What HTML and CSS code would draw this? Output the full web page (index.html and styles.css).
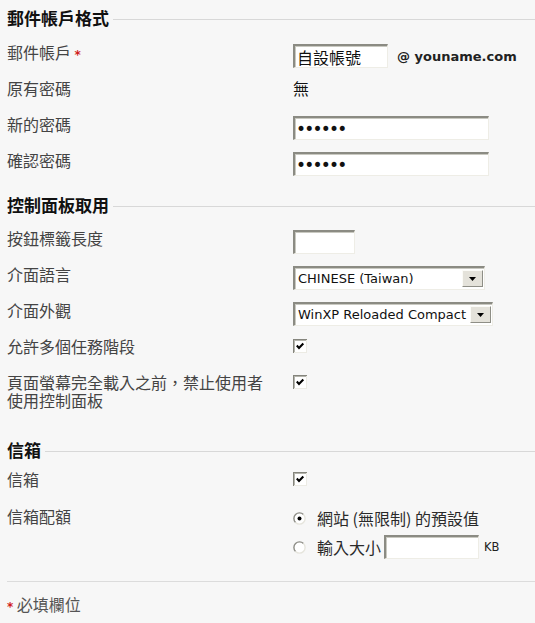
FILE: index.html
```html
<!DOCTYPE html>
<html lang="zh-Hant">
<head>
<meta charset="utf-8">
<title>郵件帳戶設定</title>
<link rel="stylesheet" href="styles.css">
</head>
<body>
<div class="page">
  <section class="group g1">
    <h2 class="group-title">郵件帳戶格式</h2>
    <div class="fields">
      <div class="row">
        <label class="lbl">郵件帳戶 <span class="req">*</span></label>
        <div class="ctl">
          <input class="txt w-acct" type="text" value="自設帳號">
          <span class="domain">@ youname.com</span>
        </div>
      </div>
      <div class="row">
        <span class="lbl">原有密碼</span>
        <div class="ctl"><span class="val">無</span></div>
      </div>
      <div class="row">
        <label class="lbl">新的密碼</label>
        <div class="ctl"><input class="txt pw w-pw" type="password" value="xxxxxx"></div>
      </div>
      <div class="row">
        <label class="lbl">確認密碼</label>
        <div class="ctl"><input class="txt pw w-pw" type="password" value="xxxxxx"></div>
      </div>
    </div>
  </section>

  <section class="group g2">
    <h2 class="group-title">控制面板取用</h2>
    <div class="fields">
      <div class="row">
        <label class="lbl">按鈕標籤長度</label>
        <div class="ctl"><input class="txt w-short" type="text" value=""></div>
      </div>
      <div class="row">
        <label class="lbl">介面語言</label>
        <div class="ctl">
          <div class="select w-lang">
            <span class="sel-text">CHINESE (Taiwan)</span>
            <span class="sel-btn"><svg width="7" height="4" viewBox="0 0 7 4"><path d="M0 0H7L3.5 4Z" fill="#000"/></svg></span>
          </div>
        </div>
      </div>
      <div class="row">
        <label class="lbl">介面外觀</label>
        <div class="ctl">
          <div class="select w-skin">
            <span class="sel-text">WinXP Reloaded Compact</span>
            <span class="sel-btn"><svg width="7" height="4" viewBox="0 0 7 4"><path d="M0 0H7L3.5 4Z" fill="#000"/></svg></span>
          </div>
        </div>
      </div>
      <div class="row">
        <label class="lbl">允許多個任務階段</label>
        <div class="ctl"><span class="cb"><svg width="14" height="14" viewBox="0 0 14 14"><rect width="14" height="14" fill="#fff"/><path d="M0 0H14V1H1V14H0Z" fill="#85857d"/><path d="M1 1H13V2H2V13H1Z" fill="#b5b5ad"/><path d="M13 1V13H1V14H14V1Z" fill="#ecebe4"/><path d="M3.8 6.6L6 8.9L10.3 4.5" stroke="#000" stroke-width="2.1" fill="none"/></svg></span></div>
      </div>
      <div class="row">
        <label class="lbl lbl-wrap">頁面螢幕完全載入之前，禁止使用者使用控制面板</label>
        <div class="ctl"><span class="cb"><svg width="14" height="14" viewBox="0 0 14 14"><rect width="14" height="14" fill="#fff"/><path d="M0 0H14V1H1V14H0Z" fill="#85857d"/><path d="M1 1H13V2H2V13H1Z" fill="#b5b5ad"/><path d="M13 1V13H1V14H14V1Z" fill="#ecebe4"/><path d="M3.8 6.6L6 8.9L10.3 4.5" stroke="#000" stroke-width="2.1" fill="none"/></svg></span></div>
      </div>
    </div>
  </section>

  <section class="group g3">
    <h2 class="group-title">信箱</h2>
    <div class="fields">
      <div class="row">
        <label class="lbl">信箱</label>
        <div class="ctl"><span class="cb"><svg width="14" height="14" viewBox="0 0 14 14"><rect width="14" height="14" fill="#fff"/><path d="M0 0H14V1H1V14H0Z" fill="#85857d"/><path d="M1 1H13V2H2V13H1Z" fill="#b5b5ad"/><path d="M13 1V13H1V14H14V1Z" fill="#ecebe4"/><path d="M3.8 6.6L6 8.9L10.3 4.5" stroke="#000" stroke-width="2.1" fill="none"/></svg></span></div>
      </div>
      <div class="row row-quota">
        <label class="lbl">信箱配額</label>
        <div class="ctl radios">
          <div class="radio-line">
            <span class="rb"><svg width="13" height="13" viewBox="0 0 13 13"><circle cx="6.5" cy="6.5" r="5.6" fill="#fff"/><path d="M2.54 10.46A5.6 5.6 0 0 1 10.46 2.54" stroke="#8d8d86" stroke-width="1.4" fill="none"/><path d="M10.46 2.54A5.6 5.6 0 0 1 2.54 10.46" stroke="#e6e5dd" stroke-width="1.4" fill="none"/><circle cx="6.5" cy="6.5" r="2" fill="#000"/></svg></span>
            <span class="opt">網站 (無限制) 的預設值</span>
          </div>
          <div class="radio-line">
            <span class="rb"><svg width="13" height="13" viewBox="0 0 13 13"><circle cx="6.5" cy="6.5" r="5.6" fill="#fff"/><path d="M2.54 10.46A5.6 5.6 0 0 1 10.46 2.54" stroke="#8d8d86" stroke-width="1.4" fill="none"/><path d="M10.46 2.54A5.6 5.6 0 0 1 2.54 10.46" stroke="#e6e5dd" stroke-width="1.4" fill="none"/></svg></span>
            <span class="opt">輸入大小</span>
            <input class="txt w-kb" type="text" value="">
            <span class="unit">KB</span>
          </div>
        </div>
      </div>
    </div>
  </section>

  <footer class="foot">
    <span class="req">*</span> 必填欄位
  </footer>
</div>
</body>
</html>
```

FILE: styles.css
```css
html, body {
  margin: 0;
  padding: 0;
  background: #f7f7f7;
}

body {
  font-family: "Noto Sans CJK TC", "Noto Sans CJK SC", sans-serif;
  color: #3c3c3c;
}

.page {
  padding: 8px 0 0 7px;
}

.group-title {
  display: flex;
  align-items: center;
  margin: 0;
  height: 20px;
  font-size: 17px;
  line-height: 20px;
  font-weight: 700;
  color: #111;
}

.group-title::after {
  content: "";
  flex: 1;
  height: 1px;
  margin-left: 4px;
  margin-top: 2px;
  background: #d8d8d8;
}

.g2 { margin-top: 19px; }
.g3 { margin-top: 31px; }

.fields {
  display: flex;
  flex-direction: column;
  gap: 12px;
  margin-top: 16px;
}

.g1 .fields { margin-top: 16px; }
.g2 .fields { margin-top: 15px; }
.g3 .fields { margin-top: 11px; }

.row {
  display: grid;
  grid-template-columns: 266px auto;
  column-gap: 20px;
  align-items: start;
  min-height: 24px;
}

.lbl {
  font-size: 16px;
  line-height: 18px;
  color: #444;
  margin-top: -1px;
}

.req {
  color: #d01c1c;
  font-family: "DejaVu Sans", sans-serif;
  font-weight: 700;
  font-size: 12px;
}

.ctl {
  display: flex;
  align-items: center;
  min-height: 24px;
}

.val {
  font-size: 16px;
  color: #111;
  line-height: 18px;
  align-self: flex-start;
  margin-top: -1px;
}

.txt {
  box-sizing: border-box;
  height: 24px;
  margin: 0;
  padding: 0 2px;
  background: #fff;
  border-style: solid;
  border-width: 2px 1px 1px 2px;
  border-color: #8b8b83 #eeede6 #eeede6 #8b8b83;
  box-shadow: inset 1px 1px 0 #c9c9c1;
  font-family: "Noto Sans CJK TC", sans-serif;
  font-size: 16px;
  color: #111;
  outline: none;
}

.w-acct { width: 95px; }
.w-pw { width: 196px; }
.w-short { width: 62px; }
.w-kb { width: 95px; margin-left: 3px; }

.pw {
  font-family: "DejaVu Sans", sans-serif;
  font-size: 17px;
  letter-spacing: -1.8px;
  padding-left: 1px;
}

.domain {
  margin-left: 9px;
  font-family: "DejaVu Sans", sans-serif;
  font-weight: 700;
  font-size: 13px;
  color: #222;
}

.select {
  box-sizing: border-box;
  display: flex;
  align-items: center;
  height: 24px;
  background: #fff;
  border-style: solid;
  border-width: 2px 1px 1px 2px;
  border-color: #8b8b83 #eeede6 #eeede6 #8b8b83;
  box-shadow: inset 1px 1px 0 #c9c9c1;
  padding-left: 3px;
  padding-right: 1px;
}

.w-lang { width: 192px; }
.w-skin { width: 200px; }

.sel-text {
  flex: 1;
  font-family: "DejaVu Sans", sans-serif;
  font-size: 13px;
  color: #111;
  white-space: nowrap;
  overflow: hidden;
}

.sel-btn {
  box-sizing: border-box;
  display: flex;
  align-items: center;
  justify-content: center;
  width: 21px;
  height: 17px;
  background: #e4e2da;
  border-style: solid;
  border-width: 1px;
  border-color: #fbfbf7 #8e8e86 #8e8e86 #fbfbf7;
}

.cb {
  display: flex;
  align-self: flex-start;
  margin-top: 1px;
}

.cb svg, .rb svg { display: block; }

.radios {
  flex-direction: column;
  align-items: flex-start;
  gap: 5px;
}

.row-quota { margin-top: 1px; }

.radio-line {
  display: flex;
  align-items: center;
  height: 24px;
}

.radio-line:first-child { margin-top: -2px; }

.rb {
  display: flex;
  margin-right: 11px;
}

.opt {
  font-size: 16px;
  color: #2a2a2a;
}

.unit {
  margin-left: 5px;
  font-family: "DejaVu Sans", sans-serif;
  font-size: 11.5px;
  color: #222;
}

.foot {
  margin-top: 22px;
  border-top: 1px solid #dcdcdc;
  padding-top: 13px;
  font-size: 16px;
  line-height: 18px;
  color: #555;
}
```
